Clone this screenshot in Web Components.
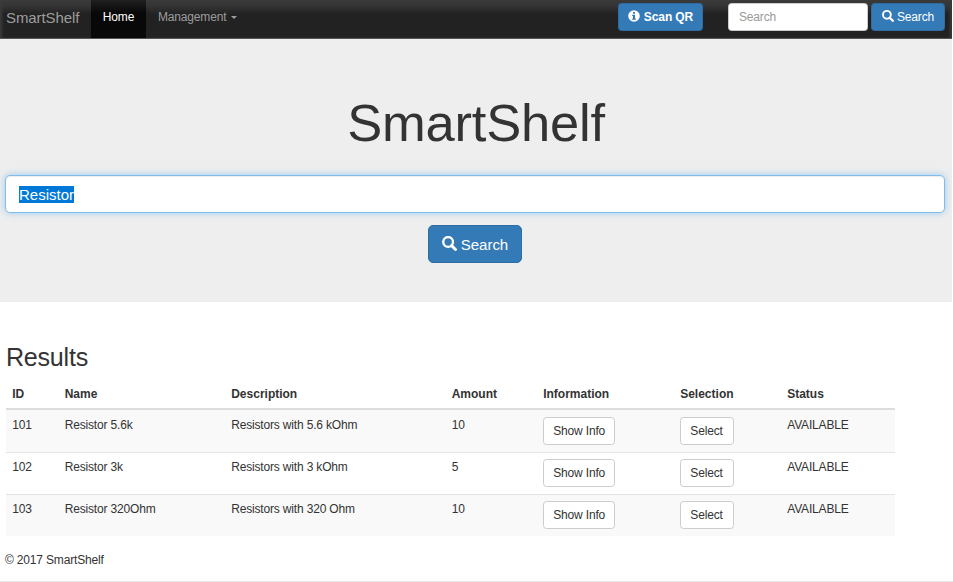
<!DOCTYPE html>
<html lang="en">
<head>
<meta charset="utf-8">
<title>SmartShelf</title>
<style>
html,body{margin:0;height:582px;overflow:hidden;background:#fff}
body{font:12px/17px "Liberation Sans",Arial,sans-serif;letter-spacing:-.17px;color:#333}
</style>
</head>
<body>
<shelf-app></shelf-app>
<script>
const define = (name, html, init) => customElements.define(name, class extends HTMLElement {
  constructor() {
    super();
    const t = document.createElement('template');
    t.innerHTML = html;
    this.attachShadow({mode: 'open'}).append(t.content.cloneNode(true));
  }
  connectedCallback() { if (init) init(this, this.shadowRoot); }
});

define('shelf-icon', `<style>:host{display:inline-block;width:12px;height:12px;flex:none}svg{display:block;width:100%;height:100%}</style><svg viewBox="0 0 12 12"></svg>`,
  (el, root) => {
    root.querySelector('svg').innerHTML = el.getAttribute('name') === 'info'
      ? '<path fill="currentColor" fill-rule="evenodd" d="M6 .2a5.8 5.8 0 1 0 0 11.600a5.800 5.800 0 0 0 0-11.600zM5 2h2v1.800H5zM4.200 4.700H7v3.700h.9v1.400H4.200V8.400H5V6h-.8z"/>'
      : '<circle cx="4.900" cy="4.800" r="3.900" fill="none" stroke="currentColor" stroke-width="1.900"/><path d="M7.700 7.700L10.800 10.800" stroke="currentColor" stroke-width="2.300" stroke-linecap="round"/>';
  });

define('shelf-button', `<style>
:host{display:inline-flex;box-sizing:border-box;height:28px;align-items:center;justify-content:center;gap:3px;border:1px solid #ccc;border-radius:3.500px;background:#fff;color:#333;white-space:nowrap}
:host([primary]){background:#337ab7;border-color:#2e6da4;color:#fff}
:host([large]){width:94px;height:38px;font-size:15.050px;letter-spacing:-.05px;border-radius:5px;gap:4px}
::slotted(shelf-icon){margin-bottom:2px}
</style><slot></slot>`);

define('shelf-input', `<style>
:host{display:flex;box-sizing:border-box;align-items:center;height:28px;padding:0 10px;border:1px solid #ccc;border-radius:3.500px;background:#fff;color:#999}
:host([focused]){height:38px;padding:1px 13px 0;border-color:#80bdec;border-radius:5px;font-size:15px;letter-spacing:0;box-shadow:inset 0 1px 1px rgba(0,0,0,.075),0 0 7px rgba(102,175,233,.6)}
:host([focused]) span{background:#0078d7;color:#fff;line-height:17px}
</style><span><slot></slot></span>`);

define('shelf-navbar', `<style>
:host{display:flex;box-sizing:border-box;height:39px;width:952px;padding-right:7px;background:linear-gradient(#3b3b3b,#343434 6px,#222 14px);border-bottom:1px solid #555;color:#9d9d9d;box-shadow:inset 3px 0 3px -1px #3c3c3c,inset -3px 0 3px -1px #3c3c3c}
nav{display:flex;flex:1}
nav>*{display:flex;padding-top:9px}
.brand{width:85px;padding-left:6px;font-size:15px;letter-spacing:-.1px}
.home{width:55px;justify-content:center;background:linear-gradient(#202020,#080808 13px);color:#fff}
.menu{padding-left:12px;gap:5px}
.menu i{margin-top:7px;width:0;height:0;border:3.500px solid transparent;border-top-color:currentColor;border-bottom:0}
.tools{display:flex;padding-top:3px}
.scan{width:85px;font-weight:bold;letter-spacing:-.1px;gap:4px;margin-right:25px}
shelf-input{width:140px;margin-right:3px}
.find{width:74px}
</style><nav><div class="brand">SmartShelf</div><div class="home">Home</div><div class="menu">Management<i></i></div></nav>
<div class="tools"><shelf-button class="scan" primary><shelf-icon name="info"></shelf-icon>Scan QR</shelf-button><shelf-input>Search</shelf-input><shelf-button class="find" primary><shelf-icon name="search"></shelf-icon>Search</shelf-button></div>`);

define('shelf-hero', `<style>
:host{display:flex;box-sizing:border-box;flex-direction:column;align-items:center;width:952px;height:263px;padding:55px 7px 0 5px;background:#eee}
h1{margin:0 0 23px;padding-left:2px;font-size:52.500px;line-height:58px;letter-spacing:-.2px;font-weight:400}
shelf-input{width:940px;margin-bottom:12px}
shelf-icon{width:15px;height:15px}
</style><h1>SmartShelf</h1><shelf-input focused>Resistor</shelf-input><shelf-button primary large><shelf-icon name="search"></shelf-icon>Search</shelf-button>`);

define('shelf-results', `<style>
:host{display:block;padding:41px 0 0 6px}
h2{margin:0 0 8px;font-size:25.100px;line-height:28px;letter-spacing:-.25px;font-weight:400}
.row{display:grid;grid-template-columns:52.500px 166.500px 220.500px 91.500px 137px 107px 1fr;width:889px;box-sizing:border-box;height:42px;padding-top:6px;border-top:1px solid #e4e4e4}
.row>*{margin-left:6.200px}
.row:nth-child(odd){background:#f9f9f9}
.head{height:31px;padding-top:7px;border-top:0;border-bottom:2px solid #ddd;font-weight:bold;letter-spacing:0}
.body .row:first-child{border-top-color:#f9f9f9}
.row .info{width:72px}.row .select{width:54px;margin-left:5.500px}
</style><h2>Results</h2><div><div class="row head" style="background:none"><span>ID</span><span>Name</span><span>Description</span><span>Amount</span><span>Information</span><span>Selection</span><span>Status</span></div></div><div class="body"></div>`,
  (el, root) => {
    const rows = [
      ['101', 'Resistor 5.6k', 'Resistors with 5.6 kOhm', '10'],
      ['102', 'Resistor 3k', 'Resistors with 3 kOhm', '5'],
      ['103', 'Resistor 320Ohm', 'Resistors with 320 Ohm', '10']
    ];
    root.querySelector('.body').innerHTML = rows.map(r => '<div class="row">' + r.map(c => `<span>${c}</span>`).join('') +
      '<shelf-button class="info">Show Info</shelf-button><shelf-button class="select">Select</shelf-button><span>AVAILABLE</span></div>').join('');
  });

define('shelf-footer', `<style>:host{display:block;box-sizing:border-box;height:46px;padding:16px 0 0 5px;border-bottom:1px solid #e7e7e7}</style><slot></slot>`);

define('shelf-app', `<style>:host{display:block}</style><shelf-navbar></shelf-navbar><shelf-hero></shelf-hero><shelf-results></shelf-results><shelf-footer>© 2017 SmartShelf</shelf-footer>`);
</script>
</body>
</html>
